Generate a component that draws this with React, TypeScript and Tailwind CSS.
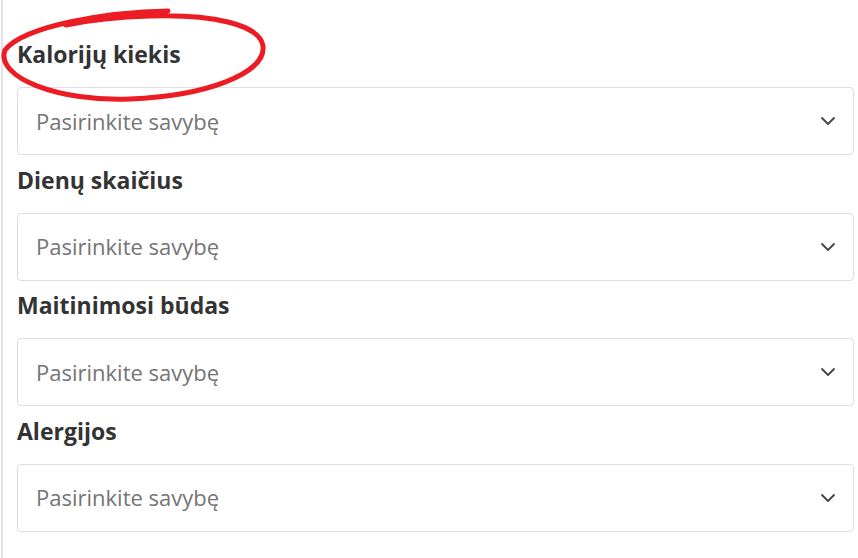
import { ChevronDown } from "lucide-react"

const fields = ["Kalorijų kiekis", "Dienų skaičius", "Maitinimosi būdas", "Alergijos"]

const Field = ({ label }: { label: string }) => {
  return (
    <div className="mb-[10.5px]">
      <p className="text-[23px] leading-[28px] font-bold text-[#333333] mb-[19px]">{label}</p>
      <div className="h-[68px] flex items-center justify-between border border-[#dedede] rounded-[4px] pl-[18px] pr-[13px] bg-white">
        <span className="text-[22px] text-[#757575]">Pasirinkite savybę</span>
        <ChevronDown className="w-[24px] h-[24px] text-[#444444]" strokeWidth={1.8} />
      </div>
    </div>
  )
}

export default function App() {
  return (
    <div
      className="relative w-[858px] h-[558px] bg-white overflow-hidden"
      style={{ fontFamily: '"Open Sans", "Noto Sans", sans-serif' }}
    >
      <div className="h-full border-l-2 border-[#e4e4e4] ml-px pl-[14px] pr-[4px] pt-[40px]">
        {fields.map((f) => (
          <Field key={f} label={f} />
        ))}
      </div>
      {/* hand-drawn highlight */}
      <svg className="absolute left-0 top-0 pointer-events-none" width="280" height="110" viewBox="0 0 280 110">
        <path
          d="M168 11 C110 12 25 25 5 50 C-5 78 60 102 130 99 C205 96 266 74 263 46 C260 24 210 14 150 16 C115 17 85 21 66 25"
          fill="none"
          stroke="#ec1c24"
          strokeWidth="5"
          strokeLinecap="round"
        />
      </svg>
    </div>
  )
}
